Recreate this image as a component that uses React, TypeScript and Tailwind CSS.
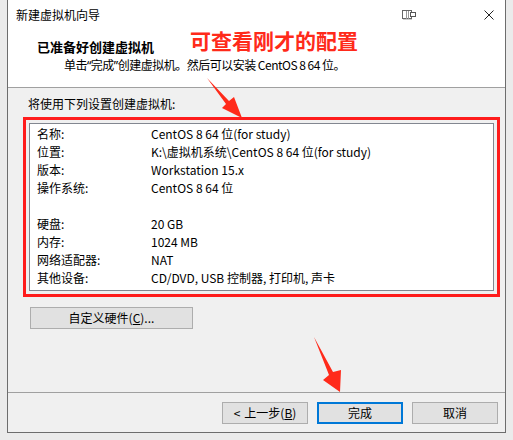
import React from "react"

const rows: [string, string][] = [
    ["名称:", "CentOS 8 64 位(for study)"],
    ["位置:", "K:\\虚拟机系统\\CentOS 8 64 位(for study)"],
    ["版本:", "Workstation 15.x"],
    ["操作系统:", "CentOS 8 64 位"],
    ["", ""],
    ["硬盘:", "20 GB"],
    ["内存:", "1024 MB"],
    ["网络适配器:", "NAT"],
    ["其他设备:", "CD/DVD, USB 控制器, 打印机, 声卡"],
]

const App = () => {
    return (
        <div className="relative w-[513px] h-[440px] overflow-hidden bg-[#ebebeb] text-[12px] text-black font-['Noto_Sans_CJK_SC','Noto_Sans',sans-serif]">
            {/* 窗口 */}
            <div className="ml-[7px] w-[499px] h-[433px] flex flex-col border-x border-b border-[#6d6d6d] bg-[#f0f0f0]">
                {/* 标题栏 */}
                <div className="h-[30px] bg-white flex items-center">
                    <p className="pl-[8px] leading-none">新建虚拟机向导</p>
                    <div className="ml-auto flex items-center">
                        <svg width="14" height="10" viewBox="0 0 14 10" className="mr-[68px]">
                            <rect x="0.5" y="0.5" width="9" height="8" fill="#fff" stroke="#666" />
                            <line x1="4.5" y1="1" x2="4.5" y2="9" stroke="#999" />
                            <line x1="6.5" y1="1" x2="6.5" y2="9" stroke="#999" />
                            <rect x="8.5" y="2.5" width="5" height="4" fill="#fff" stroke="#555" />
                            <line x1="1" y1="9.5" x2="10" y2="9.5" stroke="#ccc" />
                        </svg>
                        <svg width="10" height="10" viewBox="0 0 10 10" className="mr-[11px]">
                            <path d="M0.5 0.5 L9.5 9.5 M9.5 0.5 L0.5 9.5" stroke="#222" strokeWidth="1" />
                        </svg>
                    </div>
                </div>

                {/* 页头 */}
                <div className="h-[57px] bg-white pt-[8px]">
                    <p className="pl-[29px] h-[18px] leading-[18px] font-bold text-[13px]">已准备好创建虚拟机</p>
                    <p className="pl-[56px] h-[17px] leading-[17px] tracking-[-0.5px]">
                        单击<span className="font-['Noto_Sans',sans-serif]">“</span>完成<span className="font-['Noto_Sans',sans-serif]">”</span>创建虚拟机。然后可以安装 CentOS 8 64 位。
                    </p>
                </div>

                {/* 主体 */}
                <div className="flex-1 flex flex-col border-t border-[#a0a0a0]">
                    <p className="pl-[20px] pt-[8px] h-[24px] leading-[16px]">将使用下列设置创建虚拟机:</p>
                    <div className="ml-[15px] mt-[5px] w-[477px] border-[3px] border-[#ff1c1c] p-[3px]">
                        <div className="border border-[#828790] bg-white pt-[1px] pb-[3px]">
                            {rows.map(([k, v], i) => (
                                <div key={i} className="flex items-center h-[18px] pl-[7px]">
                                    <span className="w-[114px]">{k}</span>
                                    <span>{v}</span>
                                </div>
                            ))}
                        </div>
                    </div>

                    <div className="ml-[22px] mt-[10px] w-[163px] h-[22px] flex items-center justify-center bg-[#e1e1e1] border border-[#adadad]">
                        自定义硬件(<span className="underline">C</span>)...
                    </div>

                    {/* 底部按钮 */}
                    <div className="mt-auto h-[40px] border-t border-[#a0a0a0] pt-[9px] pr-[7px] flex justify-end gap-[9px]">
                        <div className="w-[86px] h-[22px] flex items-center justify-center bg-[#e1e1e1] border border-[#adadad]">
                            <span className="mr-[4px]">&lt;</span>上一步(<span className="underline">B</span>)
                        </div>
                        <div className="w-[86px] h-[22px] flex items-center justify-center bg-[#e1e1e1] border-2 border-[#0078d7]">
                            完成
                        </div>
                        <div className="w-[86px] h-[22px] flex items-center justify-center bg-[#e1e1e1] border border-[#adadad]">
                            取消
                        </div>
                    </div>
                </div>
            </div>

            {/* 标注 */}
            <p className="absolute left-[190px] top-[27px] text-[21px] leading-[26px] font-bold text-[#ff2a1a]">可查看刚才的配置</p>
            <svg className="absolute left-0 top-0 pointer-events-none" width="513" height="440" viewBox="0 0 513 440">
                <polygon points="207,78 229,101 234,97 242,118 222,108 226,104" fill="#ff2a1a" />
                <polygon points="314,337 333,372 341,370 340,392 323,380 329,375" fill="#ff2a1a" />
            </svg>
        </div>
    )
}

export default App
